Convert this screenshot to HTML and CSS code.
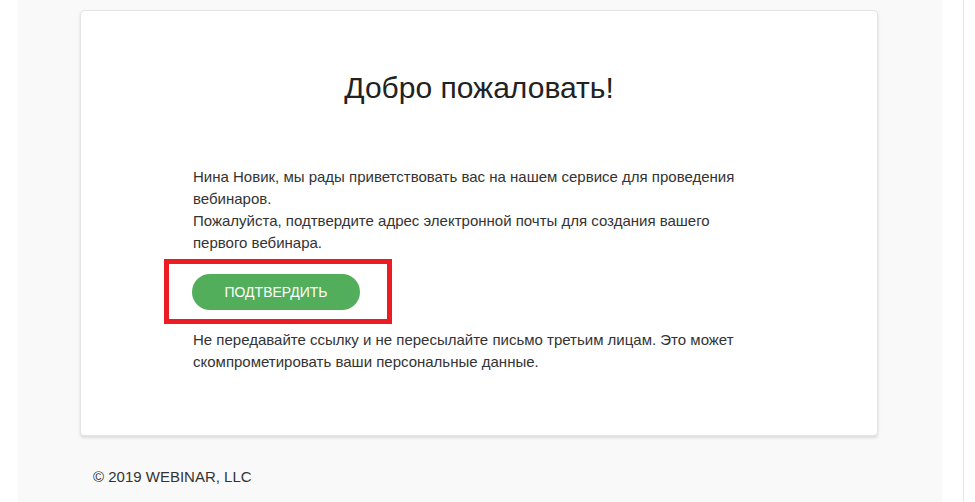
FILE: index.html
```html
<!DOCTYPE html>
<html lang="ru">
<head>
<meta charset="utf-8">
<title>Добро пожаловать!</title>
<link rel="stylesheet" href="styles.css">
</head>
<body>
  <div class="page">
    <div class="card">
      <h1 class="title">Добро пожаловать!</h1>
      <div class="content">
        <p class="text">Нина Новик, мы рады приветствовать вас на нашем сервисе для проведения вебинаров.<br>Пожалуйста, подтвердите адрес электронной почты для создания вашего первого вебинара.</p>
        <div class="action">
          <span class="btn-wrap">
            <a class="btn" href="#">Подтвердить</a>
            <span class="highlight"></span>
          </span>
        </div>
        <p class="text note">Не передавайте ссылку и не пересылайте письмо третьим лицам. Это может скомпрометировать ваши персональные данные.</p>
      </div>
    </div>
    <div class="footer">© 2019 WEBINAR, LLC</div>
  </div>
  <div class="edge"></div>
</body>
</html>
```
FILE: styles.css
```css
html, body {
  margin: 0;
  padding: 0;
  height: 100%;
  background: #ffffff;
}
body {
  display: flex;
  align-items: stretch;
  font-family: "Liberation Sans", Arial, sans-serif;
  color: #333333;
  overflow: hidden;
}
.page {
  margin-left: 18px;
  width: 924px;
  min-height: 100vh;
  background: #f9f9f9;
  padding-top: 10px;
  box-sizing: border-box;
}
.edge {
  margin-left: 21px;
  width: 1px;
  background: #e6e6e6;
}
.card {
  margin-left: 62px;
  width: 798px;
  box-sizing: border-box;
  background: #ffffff;
  border: 1px solid #e4e4e4;
  border-radius: 4px;
  box-shadow: 0 2px 3px rgba(0, 0, 0, 0.12);
  padding: 60px 0 62px;
}
.title {
  margin: 0;
  font-size: 30px;
  font-weight: normal;
  line-height: 34.5px;
  text-align: center;
  color: #222222;
}
.content {
  width: 572px;
  margin: 60px auto 0;
}
.text {
  margin: 0;
  font-size: 15px;
  line-height: 22px;
  color: #333333;
}
.action {
  display: flex;
  margin-top: 20px;
}
.btn-wrap {
  position: relative;
  display: inline-flex;
  margin-left: -1px;
}
.btn {
  display: flex;
  align-items: center;
  justify-content: center;
  width: 168px;
  height: 36px;
  border-radius: 18px;
  background: #52ae5a;
  color: #ffffff;
  font-size: 14px;
  text-transform: uppercase;
  text-decoration: none;
}
.highlight {
  position: absolute;
  left: -28px;
  top: -15px;
  right: -32px;
  bottom: -14px;
  border: 5px solid #ec1c24;
  pointer-events: none;
}
.note {
  margin-top: 19px;
}
.footer {
  margin: 30px 0 0 75px;
  font-size: 15px;
  line-height: 22px;
  color: #333333;
}
```
